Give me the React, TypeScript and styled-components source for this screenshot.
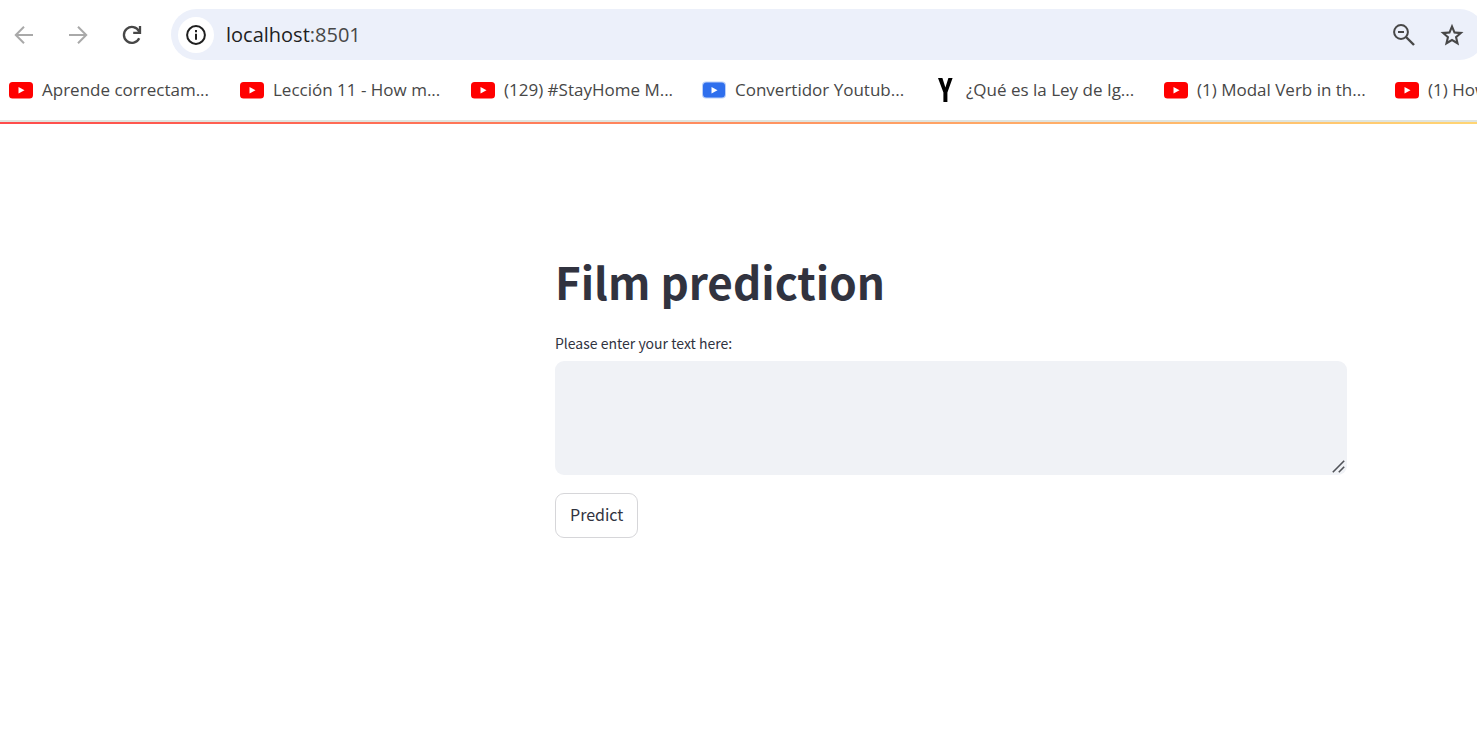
import React from "react";
import styled, { createGlobalStyle } from "styled-components";

const GlobalStyle = createGlobalStyle`
  *, *::before, *::after { box-sizing: border-box; }
  body { margin: 0; background: #ffffff; overflow-x: hidden; }
`;

const uiFont = `"Open Sans", "Noto Sans", sans-serif`;
const pageFont = `"Noto Sans CJK SC", "Open Sans", sans-serif`;

const Page = styled.div`
  min-height: 100vh;
  overflow-x: hidden;
`;

const Toolbar = styled.header`
  display: flex;
  align-items: center;
  padding: 9px 0 0 10px;
  font-family: ${uiFont};
`;

const NavButtons = styled.nav`
  display: flex;
  gap: 26px;
  margin-right: 25px;
`;

const IconButton = styled.button<{ $muted?: boolean }>`
  display: flex;
  align-items: center;
  justify-content: center;
  width: 28px;
  height: 28px;
  padding: 0;
  border: 0;
  background: transparent;
  color: ${({ $muted }) => ($muted ? "#a9a9a9" : "#474747")};
`;

const AddressBar = styled.div`
  flex: 1;
  display: flex;
  align-items: center;
  height: 51px;
  margin-right: -8px;
  padding: 0 19px 0 7px;
  border-radius: 26px;
  background: #ecf0fa;
`;

const SiteInfo = styled.button`
  display: flex;
  align-items: center;
  justify-content: center;
  width: 36px;
  height: 36px;
  padding: 0;
  border: 0;
  border-radius: 50%;
  background: #ffffff;
  color: #1f1f1f;
`;

const Address = styled.a`
  flex: 1;
  margin-left: 12px;
  font-size: 20px;
  line-height: 28px;
  color: #1f1f1f;
  text-decoration: none;
`;

const Port = styled.span`
  color: #474747;
`;

const AddressActions = styled.div`
  display: flex;
  gap: 20px;
`;

const Bookmarks = styled.nav`
  display: flex;
  height: 60px;
  padding-left: 9px;
  overflow: hidden;
  font-family: ${uiFont};
`;

const Bookmark = styled.a`
  flex: 0 0 231px;
  display: flex;
  align-items: center;
  gap: 9px;
  font-size: 17px;
  line-height: 24px;
  color: #474747;
  text-decoration: none;
  white-space: nowrap;

  svg { flex: none; }
`;

const AccentLine = styled.div`
  height: 4px;
  border-top: 2px solid #dfe4df;
  background: linear-gradient(90deg, #ff4b4b, #ffd574) padding-box;
`;

const Main = styled.main`
  max-width: 922px;
  margin-left: auto;
  padding: 123px 130px 0 0;
  font-family: ${pageFont};
  color: #31333f;
`;

const Title = styled.h1`
  margin: 0;
  font-size: 44px;
  line-height: 68px;
  font-weight: 700;
`;

const Label = styled.label`
  display: block;
  margin-top: 18px;
  font-size: 14px;
  line-height: 20px;
`;

const TextBox = styled.div`
  position: relative;
  margin-top: 8px;
`;

const TextArea = styled.textarea`
  display: block;
  width: 100%;
  height: 114px;
  padding: 16px;
  border: 0;
  border-radius: 9px;
  background: #f0f2f6;
  color: inherit;
  font: inherit;
  resize: none;
`;

const Grip = styled.svg`
  position: absolute;
  right: 2px;
  bottom: 2px;
`;

const PredictButton = styled.button`
  display: block;
  margin-top: 18px;
  padding: 0 14px 4px;
  height: 45px;
  border: 1px solid #d6d6d9;
  border-radius: 9px;
  background: #ffffff;
  color: inherit;
  font-family: inherit;
  font-size: 16px;
  line-height: 24px;
`;

type IconKind = "youtube" | "converter" | "letter";

const BookmarkIcon = ({ kind }: { kind: IconKind }) => {
  if (kind === "letter") {
    return (
      <svg width="24" height="24" viewBox="0 0 24 24" aria-hidden="true">
        <path d="M5 0h4.4l3 9.5 3-9.5h4.2l-5.2 14.500v9.500h-4V14.500z" fill="#000" />
      </svg>
    );
  }
  const blue = kind === "converter";
  return (
    <svg width="24" height="24" viewBox="0 0 24 24" aria-hidden="true">
      {blue && <rect x="0" y="3.5" width="24" height="17" rx="4" fill="#b9cff8" />}
      <rect
        x={blue ? 1 : 0}
        y={blue ? 4.5 : 4}
        width={blue ? 22 : 24}
        height={blue ? 15 : 16.5}
        rx="3.5"
        fill={blue ? "#2f6fed" : "#ff0000"}
      />
      <path d="M9.5 9l6 3.2-6 3.2z" fill="#fff" />
    </svg>
  );
};

const bookmarks: { kind: IconKind; title: string }[] = [
  { kind: "youtube", title: "Aprende correctam..." },
  { kind: "youtube", title: "Lección 11 - How m..." },
  { kind: "youtube", title: "(129) #StayHome M..." },
  { kind: "converter", title: "Convertidor Youtub..." },
  { kind: "letter", title: "¿Qué es la Ley de Ig..." },
  { kind: "youtube", title: "(1) Modal Verb in th..." },
  { kind: "youtube", title: "(1) How" },
];

export default function App() {
  return (
    <Page>
      <GlobalStyle />
      <Toolbar>
        <NavButtons aria-label="History">
          <IconButton $muted aria-label="Back">
            <svg width="20" height="20" viewBox="0 0 20 20" fill="none" stroke="currentColor" strokeWidth="2">
              <path d="M19 10H2.5M10 1.8L1.8 10l8.2 8.2" />
            </svg>
          </IconButton>
          <IconButton $muted aria-label="Forward">
            <svg width="20" height="20" viewBox="0 0 20 20" fill="none" stroke="currentColor" strokeWidth="2">
              <path d="M1 10h16.5M10 1.8l8.2 8.2-8.2 8.2" />
            </svg>
          </IconButton>
          <IconButton aria-label="Reload">
            <svg width="20" height="20" viewBox="0 0 20 20" fill="none" stroke="currentColor" strokeWidth="2.3">
              <path d="M17.2 13.2A8 8 0 1 1 17 6.2L17.8 7.6M18 1v6.8h-6.8" />
            </svg>
          </IconButton>
        </NavButtons>
        <AddressBar>
          <SiteInfo aria-label="Site information">
            <svg width="20" height="20" viewBox="0 0 20 20" fill="none" stroke="currentColor" strokeWidth="2">
              <circle cx="10" cy="10" r="8.9" />
              <path d="M10 8.8v6M10 5v2.2" />
            </svg>
          </SiteInfo>
          <Address href="#">
            localhost<Port>:8501</Port>
          </Address>
          <AddressActions>
            <IconButton aria-label="Zoom">
              <svg width="22" height="22" viewBox="0 0 22 22" fill="none" stroke="currentColor" strokeWidth="2">
                <circle cx="8" cy="8" r="6.9" />
                <path d="M5 8h6" />
                <path d="M13 13l8 8" strokeWidth="2.4" />
              </svg>
            </IconButton>
            <IconButton aria-label="Bookmark this page">
              <svg width="24" height="24" viewBox="0 0 24 24" fill="currentColor">
                <path
                  fillRule="evenodd"
                  d="M12 0.8l3.2 7.6 8.3.7-6.3 5.4 1.9 8.1L12 18.3l-7.1 4.3 1.9-8.1L.5 9.1l8.3-.7zM12 6.3l-1.8 4.2-4.4.4 3.3 2.9-1 4.3 3.9-2.3 3.9 2.3-1-4.3 3.3-2.9-4.4-.4z"
                />
              </svg>
            </IconButton>
          </AddressActions>
        </AddressBar>
      </Toolbar>
      <Bookmarks aria-label="Bookmarks">
        {bookmarks.map(({ kind, title }) => (
          <Bookmark href="#" key={title}>
            <BookmarkIcon kind={kind} />
            {title}
          </Bookmark>
        ))}
      </Bookmarks>
      <AccentLine />
      <Main>
        <Title>Film prediction</Title>
        <Label htmlFor="film-text">Please enter your text here:</Label>
        <TextBox>
          <TextArea id="film-text" />
          <Grip width="13" height="13" viewBox="0 0 13 13" fill="none" stroke="#505258" strokeWidth="1.6" aria-hidden="true">
            <path d="M.8 12.2L12.2.8M6.8 12.2l5.4-5.4" />
          </Grip>
        </TextBox>
        <PredictButton type="button">Predict</PredictButton>
      </Main>
    </Page>
  );
}
